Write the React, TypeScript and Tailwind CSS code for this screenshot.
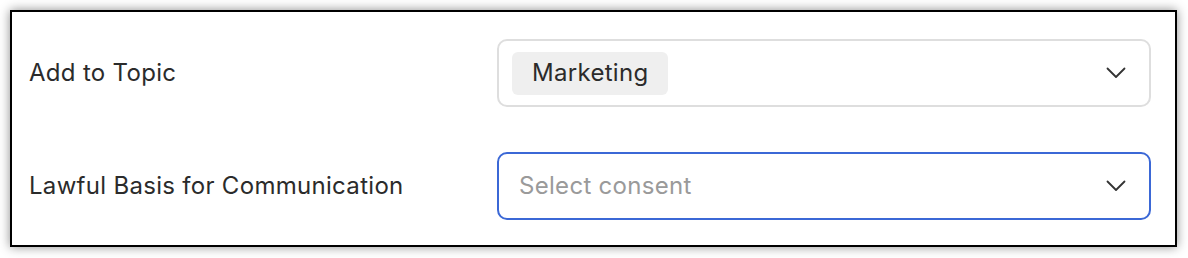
import React from "react";

const Chevron = () => (
  <svg width="20" height="12" viewBox="0 0 20 12" fill="none" className="shrink-0">
    <path d="M1.5 1.5 L10 10 L18.5 1.5" stroke="#333" strokeWidth="1.8" strokeLinecap="round" strokeLinejoin="round" />
  </svg>
);

export default function App() {
  return (
    <div className="w-[1188px] h-[258px] bg-white p-[10px] font-['Inter',sans-serif] tracking-[0.3px]">
      <div className="w-[1167px] h-[237px] border-2 border-black bg-white shadow-[0_0_10px_rgba(0,0,0,0.45)] pt-[27px] pl-[17px] pr-[24px] flex flex-col gap-[45px]">
        <div className="flex items-center">
          <div className="w-[468px] text-[24px] text-[#2b2b2b] leading-none">Add to Topic</div>
          <div className="flex-1 h-[68px] border-2 border-[#dedede] rounded-[10px] flex items-center pl-[13px] pr-[23px]">
            <div className="h-[43px] px-[20px] bg-[#efefef] rounded-[6px] flex items-center text-[24px] text-[#2b2b2b]">Marketing</div>
            <div className="flex-1" />
            <Chevron />
          </div>
        </div>
        <div className="flex items-center">
          <div className="w-[468px] text-[24px] text-[#2b2b2b] leading-none">Lawful Basis for Communication</div>
          <div className="flex-1 h-[68px] border-2 border-[#3b68d6] rounded-[10px] flex items-center pl-[20px] pr-[23px]">
            <div className="text-[24px] text-[#9a9a9a]">Select consent</div>
            <div className="flex-1" />
            <Chevron />
          </div>
        </div>
      </div>
    </div>
  );
}
